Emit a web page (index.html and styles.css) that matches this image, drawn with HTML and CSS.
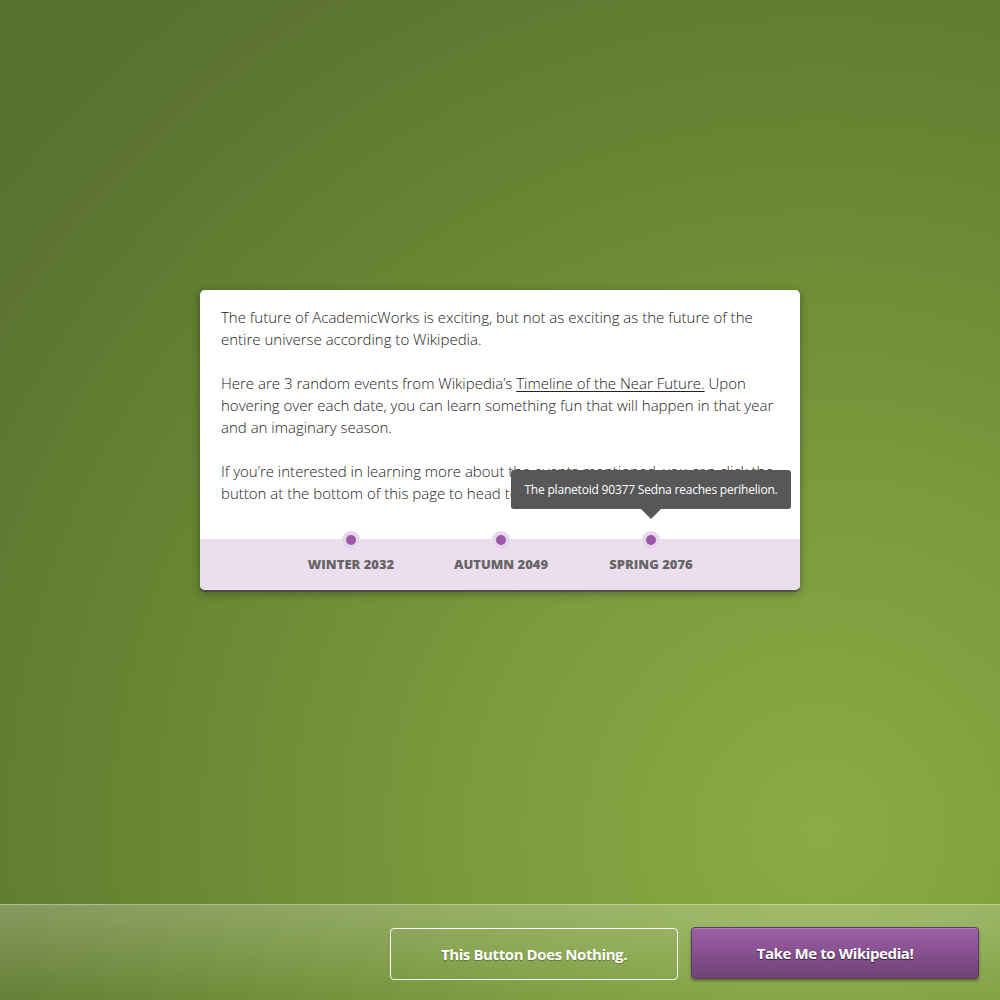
FILE: index.html
```html
<!DOCTYPE html>
<html lang="en">
<head>
<meta charset="utf-8">
<title>AcademicWorks Future</title>
<link rel="stylesheet" href="styles.css">
</head>
<body>
<div class="page">
  <main class="stage">
    <section class="card">
      <div class="card-body">
        <p>The future of AcademicWorks is exciting, but not as exciting as the future of the entire universe according to Wikipedia.</p>
        <p>Here are 3 random events from Wikipedia’s <a href="#" class="link">Timeline of the Near Future.</a> Upon hovering over each date, you can learn something fun that will happen in that year and an imaginary season.</p>
        <p>If you’re interested in learning more about the events mentioned, you can click the button at the bottom of this page to head to Wikipedia.</p>
      </div>
      <div class="timeline">
        <div class="event">
          <span class="dot"></span>
          <span class="label">Winter 2032</span>
        </div>
        <div class="event">
          <span class="dot"></span>
          <span class="label">Autumn 2049</span>
        </div>
        <div class="event">
          <div class="tooltip">The planetoid 90377 Sedna reaches perihelion.</div>
          <span class="dot"></span>
          <span class="label">Spring 2076</span>
        </div>
      </div>
    </section>
  </main>
  <footer class="bar">
    <button class="btn btn-ghost">This Button Does Nothing.</button>
    <button class="btn btn-primary">Take Me to Wikipedia!</button>
  </footer>
</div>
</body>
</html>
```

FILE: styles.css
```css
html, body {
  margin: 0;
  padding: 0;
  height: 100%;
}

body {
  font-family: "Open Sans", "Liberation Sans", sans-serif;
  background: radial-gradient(circle at 82% 83%, #8aab45 0%, #7c9c3d 28%, #6b8834 55%, #5b7330 85%, #58702d 100%);
  color: #333;
}

.page {
  height: 1000px;
  display: flex;
  flex-direction: column;
}

.stage {
  flex: 1;
  display: flex;
  justify-content: center;
  align-items: flex-start;
  padding-top: 290px;
}

.card {
  width: 600px;
  background: #fff;
  border-radius: 5px;
  box-shadow: 0 2px 0 rgba(70, 50, 80, 0.55), 0 3px 10px rgba(0, 0, 0, 0.35);
}

.card-body {
  padding: 16px 21px 35px;
  font-size: 15px;
  font-weight: 300;
  line-height: 22px;
  color: #222;
}

.card-body p {
  margin: 0 0 22px;
}

.card-body p:last-child {
  margin-bottom: 0;
}

.link {
  color: #222;
  text-decoration: underline;
  text-underline-offset: 2px;
  text-decoration-thickness: 1px;
}

.timeline {
  height: 51px;
  background: #ebdfed;
  border-radius: 0 0 5px 5px;
  display: flex;
  justify-content: center;
  padding-left: 2px;
}

.event {
  position: relative;
  width: 150px;
  display: flex;
  flex-direction: column;
  align-items: center;
}

.dot {
  width: 10px;
  height: 10px;
  margin-top: -8px;
  border-radius: 50%;
  background: #9b59a8;
  border: 4px solid #e6d6e9;
  box-sizing: content-box;
}

.label {
  margin-top: 6px;
  font-size: 13px;
  font-weight: 800;
  text-transform: uppercase;
  color: #666;
}

.tooltip {
  position: absolute;
  bottom: 81px;
  left: 50%;
  transform: translateX(-50%);
  width: 280px;
  height: 39px;
  box-sizing: border-box;
  background: #575757;
  color: #fff;
  font-size: 12px;
  letter-spacing: -0.2px;
  line-height: 39px;
  text-align: center;
  border-radius: 3px;
  white-space: nowrap;
}

.tooltip::after {
  content: "";
  position: absolute;
  top: 100%;
  left: 50%;
  margin-left: -10px;
  border-left: 10px solid transparent;
  border-right: 10px solid transparent;
  border-top: 10px solid #575757;
}

.bar {
  box-sizing: border-box;
  height: 96px;
  border-top: 1px solid rgba(255, 255, 255, 0.45);
  background: linear-gradient(to bottom, rgba(255, 255, 255, 0.22), rgba(255, 255, 255, 0.02));
  display: flex;
  justify-content: flex-end;
  align-items: flex-start;
  gap: 13px;
  padding: 22px 21px 0 0;
}

.btn {
  width: 288px;
  height: 52px;
  font-family: "Open Sans", "Liberation Sans", sans-serif;
  font-size: 15px;
  font-weight: 700;
  letter-spacing: -0.4px;
  color: #fff;
  border-radius: 4px;
  cursor: pointer;
}

.btn-ghost {
  background: transparent;
  border: 1px solid #fff;
  margin-top: 1px;
  text-shadow: 0 1px 1px rgba(0, 0, 0, 0.3);
}

.btn-primary {
  border: 1px solid #5e3a66;
  background: linear-gradient(to bottom, #9d5fa5, #6f4277);
  box-shadow: 0 2px 3px rgba(0, 0, 0, 0.35), inset 0 1px 0 rgba(255, 255, 255, 0.2);
  text-shadow: 0 1px 1px rgba(0, 0, 0, 0.7);
}
```
